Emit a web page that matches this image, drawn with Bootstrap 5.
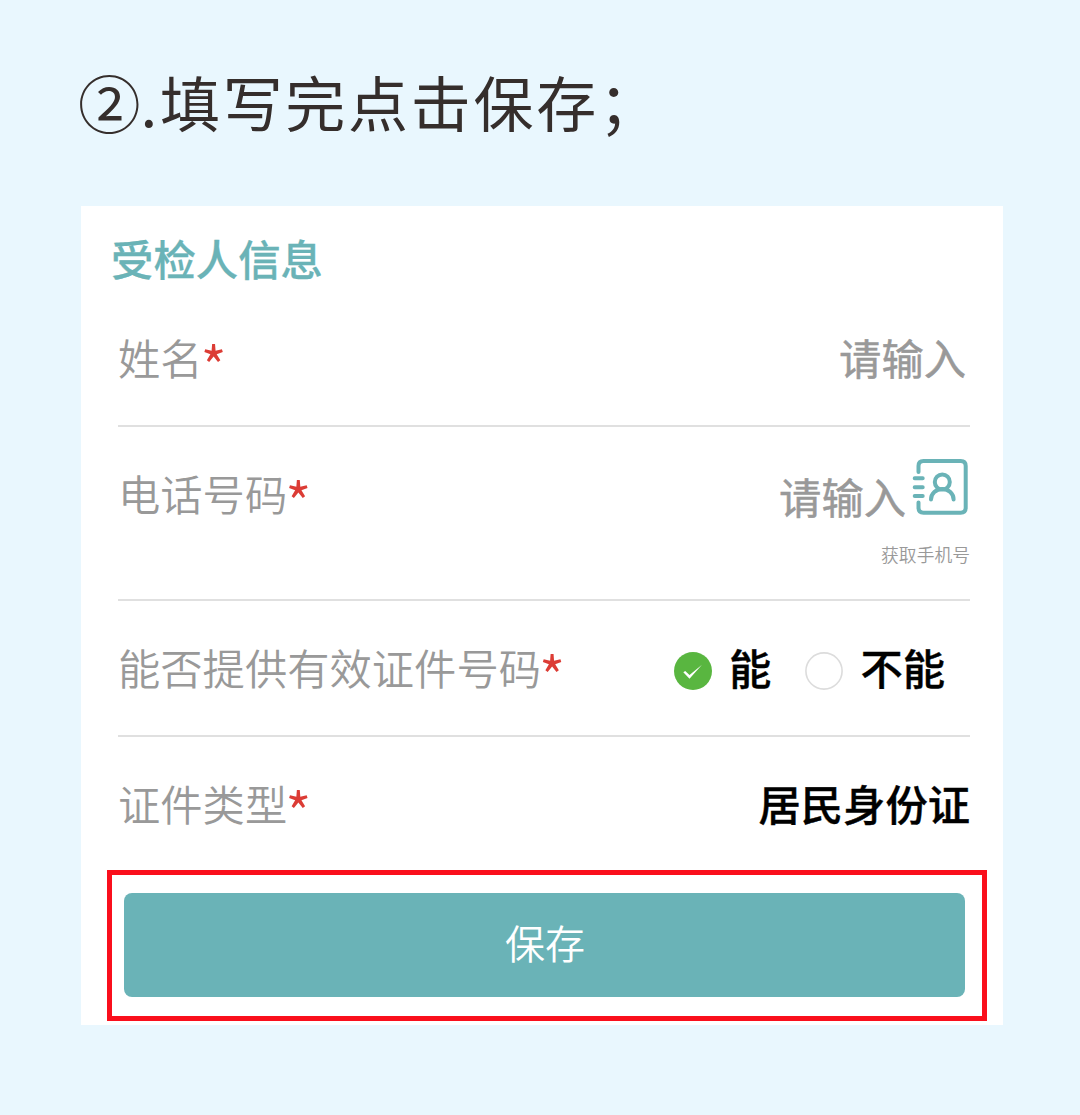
<!DOCTYPE html>
<html lang="zh-CN">
<head>
<meta charset="utf-8">
<meta name="viewport" content="width=device-width, initial-scale=1">
<title>受检人信息</title>
<link href="https://cdn.jsdelivr.net/npm/bootstrap@5.3.0/dist/css/bootstrap.min.css" rel="stylesheet">
<style>
body{background:#e9f7fe;font-family:"Noto Sans CJK SC",sans-serif;height:1115px;overflow:hidden}
.step-title{font-size:60px;letter-spacing:2.7px;line-height:90px;height:206px;padding:56px 0 0 78px;color:#352e2c;white-space:nowrap}
.step-no{font-size:62.6px;letter-spacing:0;line-height:1;vertical-align:-1px}
.panel{width:922px;height:819px;margin-left:81px;background:#fff}
.panel-title{font-size:42.4px;line-height:60px;height:85px;padding:22px 0 0 30px;color:#6ab3b7;font-weight:500;-webkit-text-stroke:.3px #6ab3b7}
.field{margin:0 33px 0 37px;font-size:42.3px;line-height:60px;border-bottom:2px solid #e0e0e0}
.field-std{height:136px;padding-top:36px}
.field-phone{height:174px;padding-top:36px}
.field-last{height:133px;border-bottom:0}
.lbl{color:#999;font-weight:350}
.req{color:#dc3c35;font-weight:350;font-size:57px;line-height:40px;vertical-align:-14px;margin-left:-2px}
.hint{color:#999;font-weight:400;-webkit-text-stroke:.5px #999}
.val{color:#000;font-weight:500;-webkit-text-stroke:.4px #000}
.phone-hint{padding-top:3px}
.book{margin-top:-4px}
.sub-hint{font-size:17.8px;line-height:26px;color:#999;font-weight:350;margin-top:15px}
.frame{width:880px;height:151px;margin-left:26px;border:5px solid #fa0f1c;padding:18px 17px 19px 12px}
.save{height:104px;background:#6ab3b7;border:0;border-radius:8px;color:#fff;font-size:40px;font-weight:350;line-height:60px;padding:0 0 6px 1px}
.save:hover{background:#5da6aa;color:#fff}
.opts{padding-right:25px}
.opt-text{margin-left:17px}
.opt-off{margin-left:34px}
.dot{margin-top:15px}
</style>
</head>
<body>
<h1 class="step-title m-0 fw-normal"><span class="step-no">②</span>.填写完点击保存；</h1>
<main class="panel">
  <h2 class="panel-title m-0">受检人信息</h2>
  <div class="field field-std d-flex justify-content-between">
    <div class="lbl">姓名<span class="req">*</span></div>
    <div class="hint pe-1">请输入</div>
  </div>
  <div class="field field-phone d-flex justify-content-between">
    <div class="lbl">电话号码<span class="req">*</span></div>
    <div class="d-flex flex-column align-items-end">
      <div class="d-flex">
        <div class="hint phone-hint">请输入</div>
        <svg class="book" width="64" height="60" viewBox="0 0 64 60" fill="none" stroke="#6ab3b7" stroke-width="4" stroke-linecap="round"><path d="M12.500 13V7q0-5 5-5H54.700q5 0 5 5V48.700q0 5-5 5H17.500q-5 0-5-5V43.500"/><path d="M8.700 19.300h8M8.700 28.300h8M8.700 37h8"/><circle cx="36.300" cy="23" r="7.500"/><path d="M25 40.500a11.300 10.500 0 0 1 22.600 0"/></svg>
      </div>
      <div class="sub-hint">获取手机号</div>
    </div>
  </div>
  <div class="field field-std d-flex justify-content-between">
    <div class="lbl">能否提供有效证件号码<span class="req">*</span></div>
    <div class="val d-flex opts">
      <svg class="dot" width="38" height="38" viewBox="0 0 38 38"><circle cx="19" cy="19" r="19" fill="#59b640"/><path d="M9.300 20.200L11.200 19l4.300 4L28 12.800 15.500 26.800z" fill="#fff"/></svg>
      <span class="opt-text">能</span>
      <svg class="opt-off dot" width="38" height="38" viewBox="0 0 38 38"><circle cx="19" cy="19" r="18.100" fill="#fff" stroke="#dcdcdc" stroke-width="1.600"/></svg>
      <span class="opt-text">不能</span>
    </div>
  </div>
  <div class="field field-std field-last d-flex justify-content-between">
    <div class="lbl">证件类型<span class="req">*</span></div>
    <div class="val">居民身份证</div>
  </div>
  <div class="frame"><button type="button" class="save btn w-100 d-block">保存</button></div>
</main>
<script src="https://cdn.jsdelivr.net/npm/bootstrap@5.3.0/dist/js/bootstrap.bundle.min.js"></script>
</body>
</html>
